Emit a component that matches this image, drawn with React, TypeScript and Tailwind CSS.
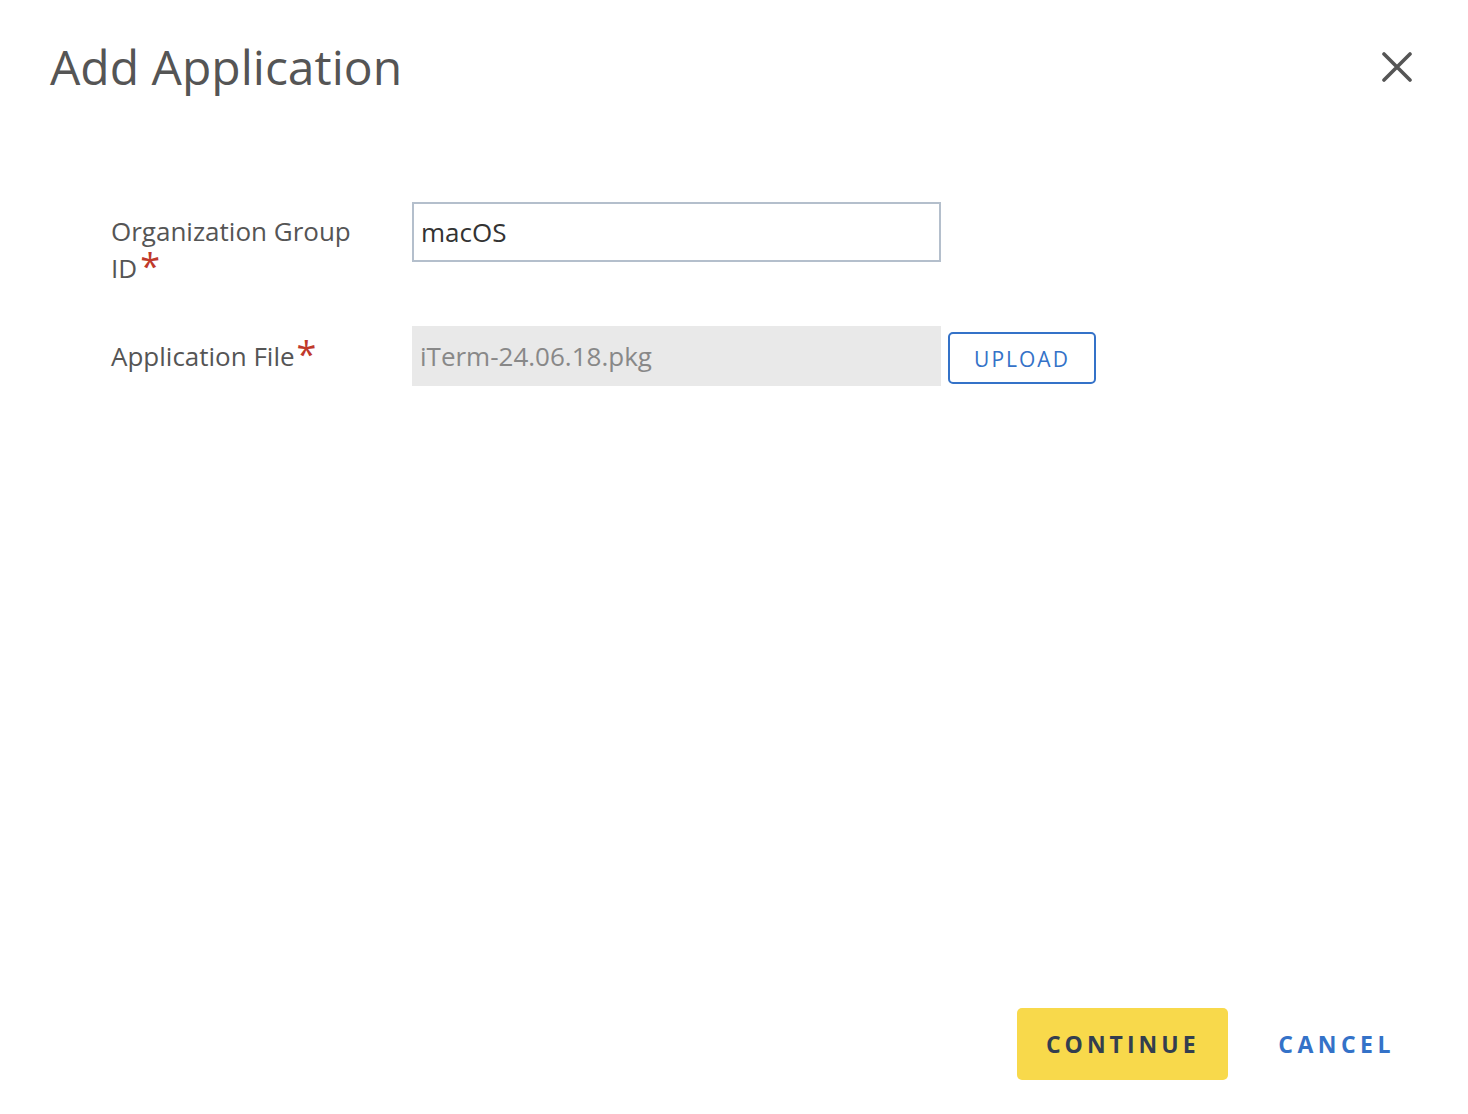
export default function App() {
  return (
    <div
      className="relative flex h-[1114px] w-[1468px] flex-col bg-white"
      style={{ fontFamily: '"Open Sans", "Noto Sans", sans-serif' }}
    >
      <div className="flex items-start justify-between pl-[50px] pr-[56px] pt-[35px]">
        <h1 className="text-[48px] leading-[64px] text-[#555555]">Add Application</h1>
        <button className="mt-[17px] flex h-[30px] w-[30px] items-center justify-center">
          <svg width="30" height="30" viewBox="0 0 30 30">
            <path d="M2 2 L28 28 M28 2 L2 28" stroke="#555555" strokeWidth="3.6" strokeLinecap="round" />
          </svg>
        </button>
      </div>

      <div className="mt-[103px] flex flex-col gap-[39px] pl-[111px]">
        <div className="flex items-start">
          <label className="mt-[11px] w-[301px] text-[26px] leading-[37px] text-[#555555]">
            Organization Group
            <br />
            ID<span className="relative top-[1px] ml-[3px] text-[36px] leading-[0px] text-[#c0392b]">*</span>
          </label>
          <input
            defaultValue="macOS"
            className="h-[60px] w-[529px] border-2 border-[#b4bfcc] px-[7px] text-[26px] text-[#333333] outline-none"
          />
        </div>

        <div className="flex items-center">
          <label className="w-[301px] text-[26px] leading-[37px] text-[#555555]">
            Application File
            <span className="relative top-[1px] ml-[2px] text-[36px] leading-[0px] text-[#c0392b]">*</span>
          </label>
          <div className="flex h-[60px] w-[529px] items-center bg-[#e9e9e9] px-[8px] text-[26px] text-[#888888]">
            iTerm-24.06.18.pkg
          </div>
          <button className="ml-[7px] mt-[4px] h-[52px] w-[148px] rounded-[5px] border-2 border-[#3472c8] pt-[3px] text-[21px] tracking-[2px] text-[#3472c8]">
            UPLOAD
          </button>
        </div>
      </div>

      <div className="mt-auto flex items-center justify-end gap-[50px] pb-[34px] pr-[73px]">
        <button className="h-[72px] w-[211px] rounded-[5px] bg-[#f8d94b] text-[23px] font-bold tracking-[4px] text-[#333e4f]">
          CONTINUE
        </button>
        <button className="text-[23px] font-bold tracking-[4.5px] text-[#3472c8]">CANCEL</button>
      </div>
    </div>
  );
}
